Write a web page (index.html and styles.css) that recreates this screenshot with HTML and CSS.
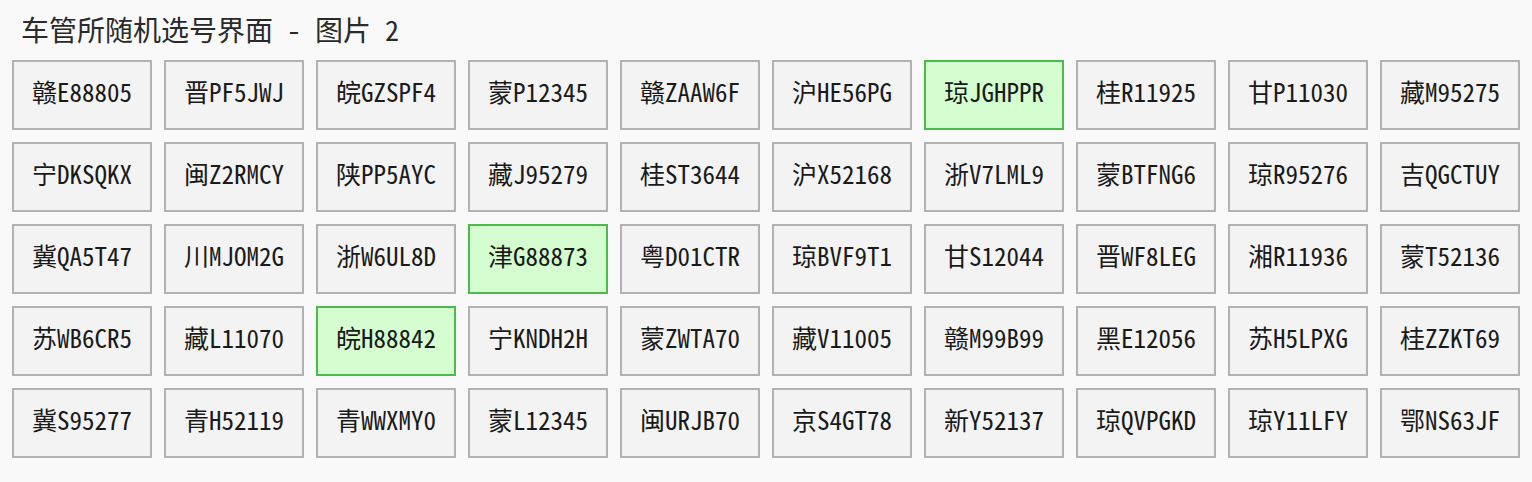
FILE: index.html
```html
<!DOCTYPE html>
<html lang="zh">
<head>
<meta charset="utf-8">
<title>车管所随机选号界面</title>
<link rel="stylesheet" href="styles.css">
</head>
<body>
<div class="page">
  <h1 class="title">车管所随机选号界面 - 图片 2</h1>
  <div class="grid">
    <div class="plate">赣E88805</div>
    <div class="plate">晋PF5JWJ</div>
    <div class="plate">皖GZSPF4</div>
    <div class="plate">蒙P12345</div>
    <div class="plate">赣ZAAW6F</div>
    <div class="plate">沪HE56PG</div>
    <div class="plate selected">琼JGHPPR</div>
    <div class="plate">桂R11925</div>
    <div class="plate">甘P11030</div>
    <div class="plate">藏M95275</div>

    <div class="plate">宁DKSQKX</div>
    <div class="plate">闽Z2RMCY</div>
    <div class="plate">陕PP5AYC</div>
    <div class="plate">藏J95279</div>
    <div class="plate">桂ST3644</div>
    <div class="plate">沪X52168</div>
    <div class="plate">浙V7LML9</div>
    <div class="plate">蒙BTFNG6</div>
    <div class="plate">琼R95276</div>
    <div class="plate">吉QGCTUY</div>

    <div class="plate">冀QA5T47</div>
    <div class="plate">川MJOM2G</div>
    <div class="plate">浙W6UL8D</div>
    <div class="plate selected">津G88873</div>
    <div class="plate">粤D01CTR</div>
    <div class="plate">琼BVF9T1</div>
    <div class="plate">甘S12044</div>
    <div class="plate">晋WF8LEG</div>
    <div class="plate">湘R11936</div>
    <div class="plate">蒙T52136</div>

    <div class="plate">苏WB6CR5</div>
    <div class="plate">藏L11070</div>
    <div class="plate selected">皖H88842</div>
    <div class="plate">宁KNDH2H</div>
    <div class="plate">蒙ZWTA70</div>
    <div class="plate">藏V11005</div>
    <div class="plate">赣M99B99</div>
    <div class="plate">黑E12056</div>
    <div class="plate">苏H5LPXG</div>
    <div class="plate">桂ZZKT69</div>

    <div class="plate">冀S95277</div>
    <div class="plate">青H52119</div>
    <div class="plate">青WWXMY0</div>
    <div class="plate">蒙L12345</div>
    <div class="plate">闽URJB70</div>
    <div class="plate">京S4GT78</div>
    <div class="plate">新Y52137</div>
    <div class="plate">琼QVPGKD</div>
    <div class="plate">琼Y11LFY</div>
    <div class="plate">鄂NS63JF</div>
  </div>
</div>
</body>
</html>
```
FILE: styles.css
```css
html, body {
  margin: 0;
  padding: 0;
  background: #f9f9f9;
}
body {
  font-family: "Noto Sans Mono CJK SC", "Noto Sans CJK SC", "DejaVu Sans Mono", monospace;
  color: #1a1a1a;
}
.page {
  padding: 0 12px 12px 12px;
}
.title {
  margin: 0;
  height: 60px;
  box-sizing: border-box;
  padding: 0 0 2px 9px;
  display: flex;
  align-items: center;
  font-size: 28px;
  font-weight: normal;
  color: #2a2a2a;
  line-height: 1;
}
.grid {
  display: grid;
  grid-template-columns: repeat(10, 140px);
  grid-auto-rows: 70px;
  gap: 12px;
}
.plate {
  box-sizing: border-box;
  border: 2px solid #b2b2b2;
  background: #f3f3f3;
  display: flex;
  align-items: center;
  justify-content: center;
  padding-bottom: 8px;
  font-size: 25px;
  color: #1a1a1a;
  line-height: 1;
}
.plate.selected {
  background: #d4fdd0;
  border-color: #4cbb4c;
}
```
